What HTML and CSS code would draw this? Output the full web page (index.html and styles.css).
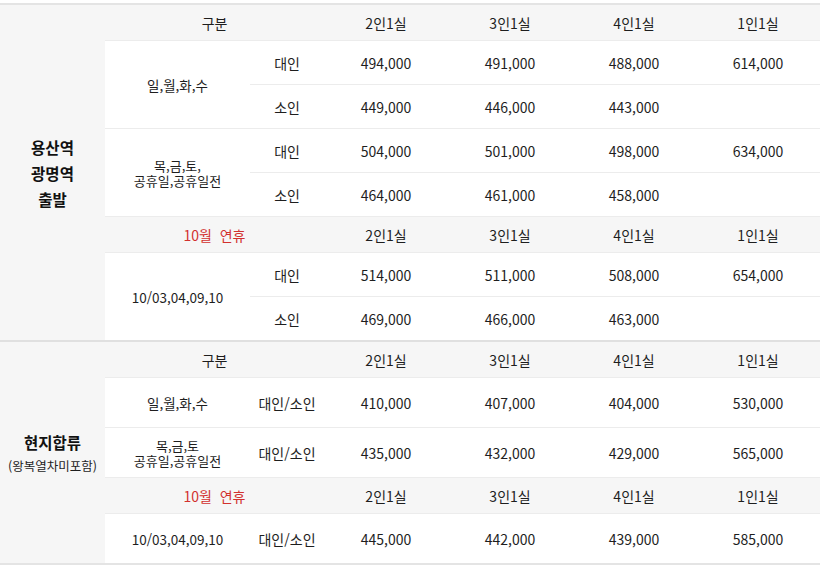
FILE: index.html
```html
<!DOCTYPE html>
<html lang="ko">
<head>
<meta charset="utf-8">
<link rel="stylesheet" href="styles.css">
</head>
<body>
<table class="price">
  <colgroup>
    <col class="c-area"><col class="c-day"><col class="c-type">
    <col class="c-room"><col class="c-room"><col class="c-room"><col class="c-room">
  </colgroup>
  <tbody class="sec">
    <tr class="head">
      <td class="area" rowspan="8"><b class="area-name">용산역<br>광명역<br>출발</b></td>
      <td colspan="2">구분</td><td>2인1실</td><td>3인1실</td><td>4인1실</td><td>1인1실</td>
    </tr>
    <tr class="row">
      <td class="day" rowspan="2">일,월,화,수</td>
      <td>대인</td><td>494,000</td><td>491,000</td><td>488,000</td><td>614,000</td>
    </tr>
    <tr class="row">
      <td>소인</td><td>449,000</td><td>446,000</td><td>443,000</td><td></td>
    </tr>
    <tr class="row">
      <td class="day two" rowspan="2">목,금,토,<br>공휴일,공휴일전</td>
      <td>대인</td><td>504,000</td><td>501,000</td><td>498,000</td><td>634,000</td>
    </tr>
    <tr class="row">
      <td>소인</td><td>464,000</td><td>461,000</td><td>458,000</td><td></td>
    </tr>
    <tr class="head">
      <td colspan="2" class="red">10월&nbsp;&nbsp;연휴</td><td>2인1실</td><td>3인1실</td><td>4인1실</td><td>1인1실</td>
    </tr>
    <tr class="row">
      <td class="day" rowspan="2">10/03,04,09,10</td>
      <td>대인</td><td>514,000</td><td>511,000</td><td>508,000</td><td>654,000</td>
    </tr>
    <tr class="row last">
      <td>소인</td><td>469,000</td><td>466,000</td><td>463,000</td><td></td>
    </tr>
  </tbody>
  <tbody class="sec sec2">
    <tr class="head">
      <td class="area" rowspan="5"><b class="area-name">현지합류</b><br><span class="area-sub">(왕복열차미포함)</span></td>
      <td colspan="2">구분</td><td>2인1실</td><td>3인1실</td><td>4인1실</td><td>1인1실</td>
    </tr>
    <tr class="row tall">
      <td class="day">일,월,화,수</td>
      <td>대인/소인</td><td>410,000</td><td>407,000</td><td>404,000</td><td>530,000</td>
    </tr>
    <tr class="row tall">
      <td class="day two">목,금,토<br>공휴일,공휴일전</td>
      <td>대인/소인</td><td>435,000</td><td>432,000</td><td>429,000</td><td>565,000</td>
    </tr>
    <tr class="head">
      <td colspan="2" class="red">10월&nbsp;&nbsp;연휴</td><td>2인1실</td><td>3인1실</td><td>4인1실</td><td>1인1실</td>
    </tr>
    <tr class="row tall last">
      <td class="day">10/03,04,09,10</td>
      <td>대인/소인</td><td>445,000</td><td>442,000</td><td>439,000</td><td>585,000</td>
    </tr>
  </tbody>
</table>
</body>
</html>
```

FILE: styles.css
```css
html, body {
  margin: 0;
  padding: 0;
  background: #ffffff;
}
body {
  padding-top: 3px;
  font-family: "Noto Sans CJK KR", "Noto Sans", sans-serif;
  color: #1e1e1e;
}
.price {
  width: 820px;
  border-collapse: collapse;
  table-layout: fixed;
  font-size: 14px;
  border-top: 2px solid #e4e4e4;
  border-bottom: 2px solid #e4e4e4;
}
.c-area { width: 105px; }
.c-day { width: 145px; }
.c-type { width: 74px; }
.c-room { width: 124px; }
.price td {
  padding: 0;
  text-align: center;
  vertical-align: middle;
  border-bottom: 1px solid #ececec;
  line-height: 16px;
  white-space: nowrap;
}
.sec2 {
  border-top: 2px solid #e0e0e0;
}
.head td {
  background: #f6f6f6;
  height: 35px;
}
.row td {
  background: #ffffff;
  height: 43px;
}
.row.tall td {
  height: 49px;
}
.row.last td {
  border-bottom: none;
}
.price td.area {
  background: #f6f6f6;
  border-bottom: none;
}
.area-name {
  font-weight: 700;
  color: #111111;
  line-height: 26px;
  font-size: 15.5px;
}
.area-sub {
  font-size: 12.5px;
  line-height: 22px;
  color: #1e1e1e;
}
.price td.day {
  font-size: 13.5px;
}
.price td.two {
  font-size: 13px;
  line-height: 15px;
}
.red {
  color: #d2312f;
}
```
